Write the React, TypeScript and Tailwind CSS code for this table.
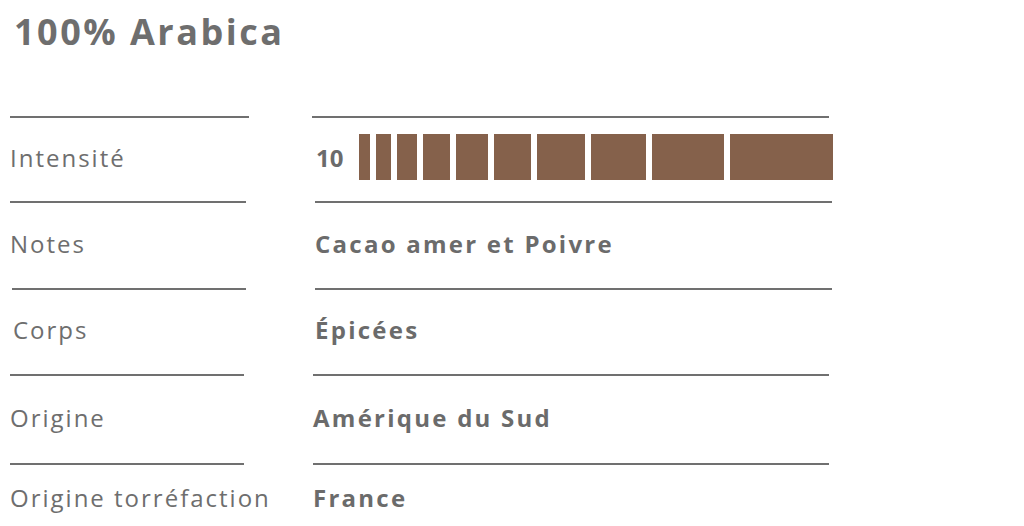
import React from "react";

const bars = [11, 15, 20, 27, 32, 37, 48, 55, 72, 103];

type Row = {
  label: string;
  value: string | null;
  lx: string;
  vx: string;
  ll: string;
  rl: string;
  h: string;
};

const rows: Row[] = [
  { label: "Intensité", value: null, lx: "pl-[10px]", vx: "ml-[16px]", ll: "ml-[10px] w-[239px]", rl: "ml-[12px] w-[517px]", h: "h-[83px]" },
  { label: "Notes", value: "Cacao amer et Poivre", lx: "pl-[10px]", vx: "ml-[15px]", ll: "ml-[10px] w-[236px]", rl: "ml-[15px] w-[517px]", h: "h-[85px]" },
  { label: "Corps", value: "Épicées", lx: "pl-[13px]", vx: "ml-[15px]", ll: "ml-[12px] w-[234px]", rl: "ml-[15px] w-[517px]", h: "h-[84px]" },
  { label: "Origine", value: "Amérique du Sud", lx: "pl-[10px]", vx: "ml-[13px]", ll: "ml-[10px] w-[234px]", rl: "ml-[13px] w-[516px]", h: "h-[87px]" },
  { label: "Origine torréfaction", value: "France", lx: "pl-[10px]", vx: "ml-[13px]", ll: "ml-[10px] w-[234px]", rl: "ml-[13px] w-[516px]", h: "h-[70px]" },
];

export default function App() {
  return (
    <div
      className="w-[1024px] h-[526px] bg-white overflow-hidden text-[#6b6b6b]"
      style={{ fontFamily: '"Open Sans", sans-serif' }}
    >
      <div className="pt-[7px] pl-[14px] h-[116px]">
        <h1 className="text-[36px] leading-[50px] font-bold tracking-[2.5px] text-[#6e6e6e]">
          100% Arabica
        </h1>
      </div>
      {rows.map((r, i) => (
        <div key={i}>
          <div className="flex">
            <div className="w-[300px] shrink-0">
              <div className={`h-[2px] bg-[#707070] ${r.ll}`} />
            </div>
            <div className="flex-1">
              <div className={`h-[2px] bg-[#707070] ${r.rl}`} />
            </div>
          </div>
          <div className={`flex ${r.h}`}>
            <div
              className={`w-[300px] shrink-0 flex items-center pb-[4px] ${r.lx} text-[24px] leading-[32px] tracking-[2px] text-[#6e6e6e] whitespace-nowrap`}
            >
              {r.label}
            </div>
            <div className="flex-1 flex items-center pb-[4px]">
              {r.value === null ? (
                <div className={`flex items-center ${r.vx}`}>
                  <span className="text-[24px] font-bold leading-[32px] w-[43px]">10</span>
                  <div className="flex gap-[6px] mt-[-2px]">
                    {bars.map((w, j) => (
                      <div key={j} className="h-[46px] bg-[#85614b]" style={{ width: w }} />
                    ))}
                  </div>
                </div>
              ) : (
                <span
                  className={`${r.vx} text-[24px] font-bold leading-[32px] tracking-[2.25px] whitespace-nowrap`}
                >
                  {r.value}
                </span>
              )}
            </div>
          </div>
        </div>
      ))}
    </div>
  );
}
